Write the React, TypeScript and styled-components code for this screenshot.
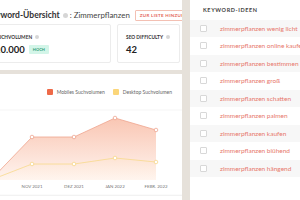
import React from "react";
import styled, { createGlobalStyle } from "styled-components";

const Global = createGlobalStyle`
  html, body { margin: 0; padding: 0; width: 300px; height: 200px; overflow: hidden; background: #e6e1da; }
  body { font-family: Lato, "Liberation Sans", sans-serif; }
  * { box-sizing: border-box; }
`;

const Page = styled.div`
  display: flex;
  gap: 8px;
  margin-left: -28px;
  width: 340px;
  height: 200px;
`;

const LeftCol = styled.div`
  width: 210px;
  flex: none;
  display: flex;
  flex-direction: column;
  gap: 4px;
  overflow: hidden;
`;

const TopSection = styled.section`
  background: #fff;
  padding: 8px 0 7px 14px;
  display: flex;
  flex-direction: column;
  gap: 2px;
`;

const HeaderRow = styled.div`
  display: flex;
  align-items: center;
  height: 14px;
  white-space: nowrap;
`;

const Title = styled.h1`
  margin: 0;
  font-size: 8.5px;
  font-weight: 700;
  color: #333;
`;

const InfoDot = styled.span<{ $size?: number }>`
  display: inline-block;
  flex: none;
  width: ${(p) => p.$size ?? 5}px;
  height: ${(p) => p.$size ?? 5}px;
  border-radius: 50%;
  background: #d6d6d6;
  margin: 0 2px 0 3px;
`;

const Subject = styled.span`
  font-size: 7.9px;
  color: #444;
`;

const AddButton = styled.button`
  margin-left: 5px;
  flex: none;
  height: 11px;
  padding: 0 4px;
  border: 1px solid #f3c0b3;
  border-radius: 1px;
  background: #fff;
  color: #e4675a;
  font-family: Lato, "Liberation Sans", sans-serif;
  font-size: 4.5px;
  font-weight: 700;
  letter-spacing: 0.3px;
  text-transform: uppercase;
  white-space: nowrap;
`;

const StatRow = styled.div`
  display: flex;
  gap: 6px;
`;

const StatCard = styled.div<{ $w: number }>`
  width: ${(p) => p.$w}px;
  flex: none;
  height: 39px;
  border: 1px solid #ececec;
  border-radius: 2px;
  padding: 8px 8px 0;
  display: flex;
  flex-direction: column;
  gap: 3px;
`;

const StatLabel = styled.div`
  display: flex;
  align-items: center;
  height: 7px;
  font-size: 4.8px;
  font-weight: 700;
  color: #333;
  text-transform: uppercase;
  white-space: nowrap;
`;

const StatValueRow = styled.div`
  display: flex;
  align-items: center;
  height: 12px;
  gap: 4px;
`;

const StatValue = styled.span`
  font-size: 9.5px;
  font-weight: 700;
  color: #222;
`;

const Badge = styled.span`
  background: #d3f5e8;
  color: #2f9a74;
  font-size: 4px;
  font-weight: 700;
  padding: 0 4px;
  height: 9px;
  line-height: 9px;
  border-radius: 1px;
  text-transform: uppercase;
`;

const ChartCard = styled.section`
  background: #fff;
  flex: 1;
  padding-top: 14px;
  display: flex;
  flex-direction: column;
`;

const Legend = styled.div`
  display: flex;
  justify-content: flex-end;
  gap: 8px;
  padding-right: 10px;
  height: 8px;
  align-items: center;
`;

const LegendItem = styled.div`
  display: flex;
  align-items: center;
  gap: 4px;
  font-size: 5px;
  color: #666;
  white-space: nowrap;
`;

const Swatch = styled.span<{ $c: string }>`
  width: 6px;
  height: 6px;
  border-radius: 1px;
  background: ${(p) => p.$c};
`;

const ChartSvg = styled.svg`
  display: block;
  flex: none;
`;

const RightPanel = styled.aside`
  width: 130px;
  flex: none;
  background: #fff;
  display: flex;
  flex-direction: column;
`;

const PanelHeader = styled.div`
  height: 19.5px;
  display: flex;
  align-items: center;
  padding-left: 13px;
  font-size: 5.5px;
  font-weight: 700;
  letter-spacing: 0.6px;
  color: #444;
`;

const Row = styled.div<{ $alt: boolean }>`
  height: 17.5px;
  flex: none;
  display: flex;
  align-items: center;
  padding-left: 10px;
  background: ${(p) => (p.$alt ? "#f7f7f7" : "#fff")};
`;

const Check = styled.span`
  width: 7px;
  height: 7px;
  flex: none;
  border: 1px solid #d8d8d8;
  border-radius: 1px;
  background: #fff;
`;

const Keyword = styled.span`
  margin-left: 13px;
  font-size: 6.5px;
  font-weight: 400;
  color: #e7786c;
  white-space: nowrap;
`;

const keywords = [
  "zimmerpflanzen wenig licht",
  "zimmerpflanzen online kaufen",
  "zimmerpflanzen bestimmen",
  "zimmerpflanzen groß",
  "zimmerpflanzen schatten",
  "zimmerpflanzen palmen",
  "zimmerpflanzen kaufen",
  "zimmerpflanzen blühend",
  "zimmerpflanzen hängend",
];

const xs = [18.7, 60, 102, 143, 184];
const orange = [84, 41, 41, 22, 34];
const yellow = [84, 68, 68, 62, 66];
const labels = ["NOV 2021", "DEZ 2021", "JAN 2022", "FEBR. 2022"];
const base = 84;

const line = (ys: number[]) => xs.map((x, i) => `${x},${ys[i]}`).join(" ");
const area = (ys: number[]) => `${xs[0]},${base} ${line(ys)} ${xs[xs.length - 1]},${base}`;

function Chart() {
  return (
    <ChartSvg width={210} height={100} viewBox="0 0 210 100">
      <defs>
        <linearGradient id="og" x1="0" y1="0" x2="0" y2="1">
          <stop offset="0" stopColor="#f9c6b3" />
          <stop offset="1" stopColor="#fff4ef" />
        </linearGradient>
        <linearGradient id="yg" x1="0" y1="0" x2="0" y2="1">
          <stop offset="0" stopColor="#fde3cf" stopOpacity="0.6" />
          <stop offset="1" stopColor="#fff6ee" stopOpacity="0.4" />
        </linearGradient>
      </defs>
      <line x1="0" x2="210" y1="14" y2="14" stroke="#efefef" strokeWidth="0.6" />
      <polygon points={area(orange)} fill="url(#og)" />
      <polygon points={area(yellow)} fill="url(#yg)" />
      <polyline points={line(orange)} fill="none" stroke="#efa48e" strokeWidth="0.8" />
      <polyline points={line(yellow)} fill="none" stroke="#f7d98b" strokeWidth="0.8" />
      {xs.slice(1).map((x, i) => (
        <g key={x}>
          <circle cx={x} cy={orange[i + 1]} r="1.8" fill="#fff" stroke="#eb9a83" strokeWidth="0.7" />
          <circle cx={x} cy={yellow[i + 1]} r="1.8" fill="#fff" stroke="#f5d27c" strokeWidth="0.7" />
          <text
            x={x}
            y={91.5}
            textAnchor="middle"
            fontSize="4.4"
            fill="#777"
            fontFamily="Lato, 'Liberation Sans', sans-serif"
          >
            {labels[i]}
          </text>
        </g>
      ))}
      <line x1="0" x2="210" y1="99.3" y2="99.3" stroke="#e8e8e8" strokeWidth="0.7" />
    </ChartSvg>
  );
}

export default function App() {
  return (
    <>
      <Global />
      <Page>
        <LeftCol>
          <TopSection>
            <HeaderRow>
              <Title>Keyword-Übersicht</Title>
              <InfoDot />
              <Subject>: Zimmerpflanzen</Subject>
              <AddButton>Zur Liste hinzufügen</AddButton>
            </HeaderRow>
            <StatRow>
              <StatCard $w={125}>
                <StatLabel>
                  Suchvolumen <InfoDot $size={4} />
                </StatLabel>
                <StatValueRow>
                  <StatValue>10.000</StatValue>
                  <Badge>Hoch</Badge>
                </StatValueRow>
              </StatCard>
              <StatCard $w={63}>
                <StatLabel>
                  SEO Difficulty <InfoDot $size={4} />
                </StatLabel>
                <StatValueRow>
                  <StatValue>42</StatValue>
                </StatValueRow>
              </StatCard>
            </StatRow>
          </TopSection>
          <ChartCard>
            <Legend>
              <LegendItem>
                <Swatch $c="#ee6a48" />
                Mobiles Suchvolumen
              </LegendItem>
              <LegendItem>
                <Swatch $c="#fbd67a" />
                Desktop Suchvolumen
              </LegendItem>
            </Legend>
            <Chart />
          </ChartCard>
        </LeftCol>
        <RightPanel>
          <PanelHeader>KEYWORD-IDEEN</PanelHeader>
          {keywords.map((k, i) => (
            <Row key={k} $alt={i % 2 === 0}>
              <Check />
              <Keyword>{k}</Keyword>
            </Row>
          ))}
        </RightPanel>
      </Page>
    </>
  );
}
